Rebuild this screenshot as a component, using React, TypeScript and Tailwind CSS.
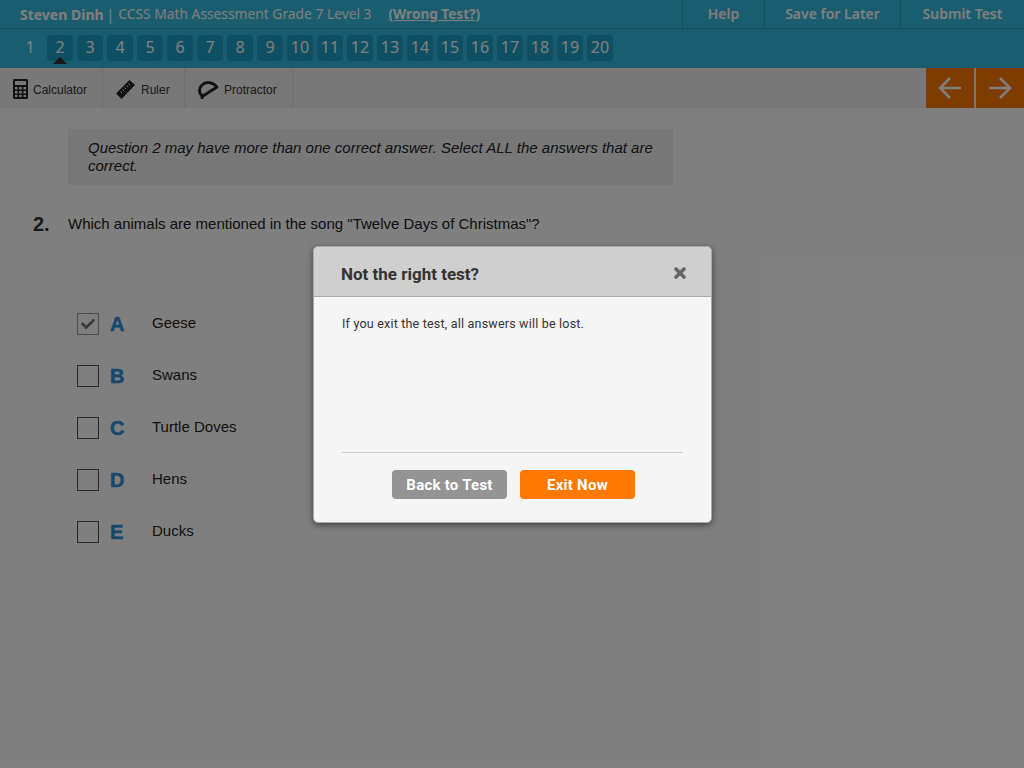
import type { ReactNode } from "react";
import { FaCheck } from "react-icons/fa";

const questions = Array.from({ length: 20 }, (_, i) => i + 1);

const answers = [
  { letter: "A", label: "Geese", checked: true },
  { letter: "B", label: "Swans", checked: false },
  { letter: "C", label: "Turtle Doves", checked: false },
  { letter: "D", label: "Hens", checked: false },
  { letter: "E", label: "Ducks", checked: false },
];

function CalculatorIcon() {
  return (
    <svg width="15" height="20" viewBox="0 0 15 20">
      <path
        fillRule="evenodd"
        fill="#222"
        d="M1.5 0h12A1.5 1.5 0 0 1 15 1.5v17a1.5 1.5 0 0 1-1.5 1.5h-12A1.5 1.5 0 0 1 0 18.5v-17A1.5 1.5 0 0 1 1.5 0zM2 2v4h11V2zM2 8v2.5h2.5V8zM6.2 8v2.5h2.6V8zM10.5 8v2.5H13V8zM2 12v2.5h2.5V12zM6.2 12v2.5h2.6V12zM10.5 12v2.5H13V12zM2 16v2h2.5v-2zM6.2 16v2h2.6v-2zM10.5 16v2H13v-2z"
      />
    </svg>
  );
}

function RulerIcon() {
  return (
    <svg width="19" height="19" viewBox="0 0 19 19">
      <path fill="#222" d="M13.5 0L19 5 5.5 19 0 13.5z" />
      <path
        stroke="#f0f0f0"
        strokeWidth="1"
        fill="none"
        d="M4.500 11.500l1.500 1.500M6.500 9.500l1.500 1.500M8.500 7.500l1.500 1.500M10.500 5.500l1.500 1.500M12.500 3.500l1.500 1.500"
      />
    </svg>
  );
}

function ProtractorIcon() {
  return (
    <svg width="21" height="20" viewBox="0 0 21 20" fill="none" stroke="#222" strokeWidth="2.8">
      <path strokeLinejoin="round" d="M19 8C15 3 8 2 4 6C0 10 1 15 5 17Z" />
      <path d="M4 16V20" />
    </svg>
  );
}

function Tool({ icon, label, className }: { icon: ReactNode; label: string; className: string }) {
  return (
    <div className={`flex items-center border-r border-[#dcdcdc] pl-[13px] pt-[2px] ${className}`}>
      {icon}
      <span className="pt-[2px] text-[12px] text-[#333]">{label}</span>
    </div>
  );
}

function App() {
  return (
    <div className="relative h-[768px] w-[1024px] overflow-hidden bg-white font-['Liberation_Sans',sans-serif]">
      {/* Top bar */}
      <header className="bg-[#34bbdc] font-['Noto_Sans',sans-serif] text-white">
        <div className="flex h-[29px] items-center justify-between border-b border-[#2a9cb8] text-[14px]">
          <div className="flex items-center pl-5">
            <span className="font-bold">Steven Dinh</span>
            <span className="ml-[3px] mr-1">|</span>
            <span className="text-[13.8px]">CCSS Math Assessment Grade 7 Level 3</span>
            <span className="ml-[17px] text-[13.6px] font-bold underline">(Wrong Test?)</span>
          </div>
          <nav className="flex h-full font-semibold">
            <span className="flex w-[82px] items-center justify-center border-l border-[#2a9cb8] pb-0.5">Help</span>
            <span className="flex w-[136px] items-center justify-center border-l border-[#2a9cb8] pb-0.5">Save for Later</span>
            <span className="flex w-[124px] items-center justify-center border-l border-[#2a9cb8] pb-0.5">Submit Test</span>
          </nav>
        </div>

        {/* Question numbers */}
        <div className="flex h-[39px] gap-1 pl-[17px] pt-1.5">
          {questions.map((n) => (
            <div
              key={n}
              className={`relative flex h-[26px] w-[26px] items-center justify-center rounded-sm pb-0.5 text-[16px] ${n === 1 ? "" : "bg-[#1ea3c4]"}`}
            >
              {n}
              {n === 2 && (
                <span className="absolute -bottom-[3px] left-1/2 h-0 w-0 -translate-x-1/2 border-x-[7px] border-b-[7px] border-x-transparent border-b-[#333]" />
              )}
            </div>
          ))}
        </div>
      </header>

      {/* Tools */}
      <div className="flex h-10 bg-[#f0f0f0]">
        <Tool icon={<CalculatorIcon />} label="Calculator" className="w-[103px] gap-[5px]" />
        <Tool icon={<RulerIcon />} label="Ruler" className="w-[82px] gap-[6px]" />
        <Tool icon={<ProtractorIcon />} label="Protractor" className="w-[108px] gap-[5px]" />
        <div className="ml-auto flex gap-0.5">
          <button className="flex w-[48px] items-center justify-center bg-[#ff7800]">
            <svg width="24" height="24" viewBox="0 0 24 24" fill="none" stroke="white" strokeWidth="2.5">
              <path d="M23 12H2M12 2L2 12l10 10" />
            </svg>
          </button>
          <button className="flex w-[48px] items-center justify-center bg-[#ff7800]">
            <svg width="24" height="24" viewBox="0 0 24 24" fill="none" stroke="white" strokeWidth="2.5">
              <path d="M1 12h21M12 2l10 10-10 10" />
            </svg>
          </button>
        </div>
      </div>

      {/* Question */}
      <main className="pt-[21px]">
        <div className="ml-[68px] w-[605px] bg-[#f0f0f0] py-[10px] pl-5 pr-4 text-[15px] italic leading-[18px] text-[#222]">
          Question 2 may have more than one correct answer. Select ALL the answers that are correct.
        </div>
        <div className="mt-[24px] flex items-center pl-[33px] text-[#222]">
          <span className="w-[35px] text-[20px] font-bold text-[#333]">2.</span>
          <span className="pt-px text-[15px]">Which animals are mentioned in the song "Twelve Days of Christmas"?</span>
        </div>
        <ul className="ml-[77px] mt-[74px] flex flex-col gap-[30px]">
          {answers.map((a) => (
            <li key={a.letter} className="flex h-[22px] items-center">
              <span
                className={`flex h-[22px] w-[22px] items-center justify-center border bg-white ${a.checked ? "border-[#999]" : "border-[#555]"}`}
              >
                {a.checked && <FaCheck className="text-[14px] text-[#777]" />}
              </span>
              <span className="ml-[11px] w-[42px] text-[20px] font-bold text-[#3090d8] [-webkit-text-stroke:0.5px_#3090d8]">
                {a.letter}
              </span>
              <span className="pb-0.5 text-[15px] text-[#222]">{a.label}</span>
            </li>
          ))}
        </ul>
      </main>

      {/* Dimmed page and dialog */}
      <div className="absolute inset-0 flex justify-center bg-black/50 pl-px pt-[246px]">
        <div className="h-[277px] w-[399px] overflow-hidden rounded-[5px] border border-[#aaa] bg-[#f5f5f5] font-['Roboto',sans-serif] shadow-[0_2px_6px_rgba(0,0,0,0.5)]">
          <div className="flex h-[50px] items-center justify-between border-b border-[#aaa] bg-[#cfcfcf] pl-[27px] pr-[25px]">
            <h2 className="pt-[7px] text-[17px] font-bold text-[#333]">Not the right test?</h2>
            <svg className="mt-0.5" width="12" height="12" viewBox="0 0 12 12" stroke="#666" strokeWidth="3.6" strokeLinecap="round">
              <path d="M2 2l8 8M10 2l-8 8" />
            </svg>
          </div>
          <p className="px-7 pt-[18px] text-[12.5px] leading-[18px] tracking-[0.2px] text-[#333]">
            If you exit the test, all answers will be lost.
          </p>
          <div className="mx-7 mt-[119px] border-t border-[#ccc]" />
          <div className="mt-[17px] flex justify-center gap-[13px] pl-[2px]">
            <button className="h-[29px] w-[115px] rounded-sm bg-[#949494] pt-0.5 text-[15px] font-bold tracking-[0.25px] text-white">
              Back to Test
            </button>
            <button className="h-[29px] w-[115px] rounded-sm bg-[#ff7800] pt-0.5 text-[15px] font-bold tracking-[0.25px] text-white">
              Exit Now
            </button>
          </div>
        </div>
      </div>
    </div>
  );
}

export default App;
